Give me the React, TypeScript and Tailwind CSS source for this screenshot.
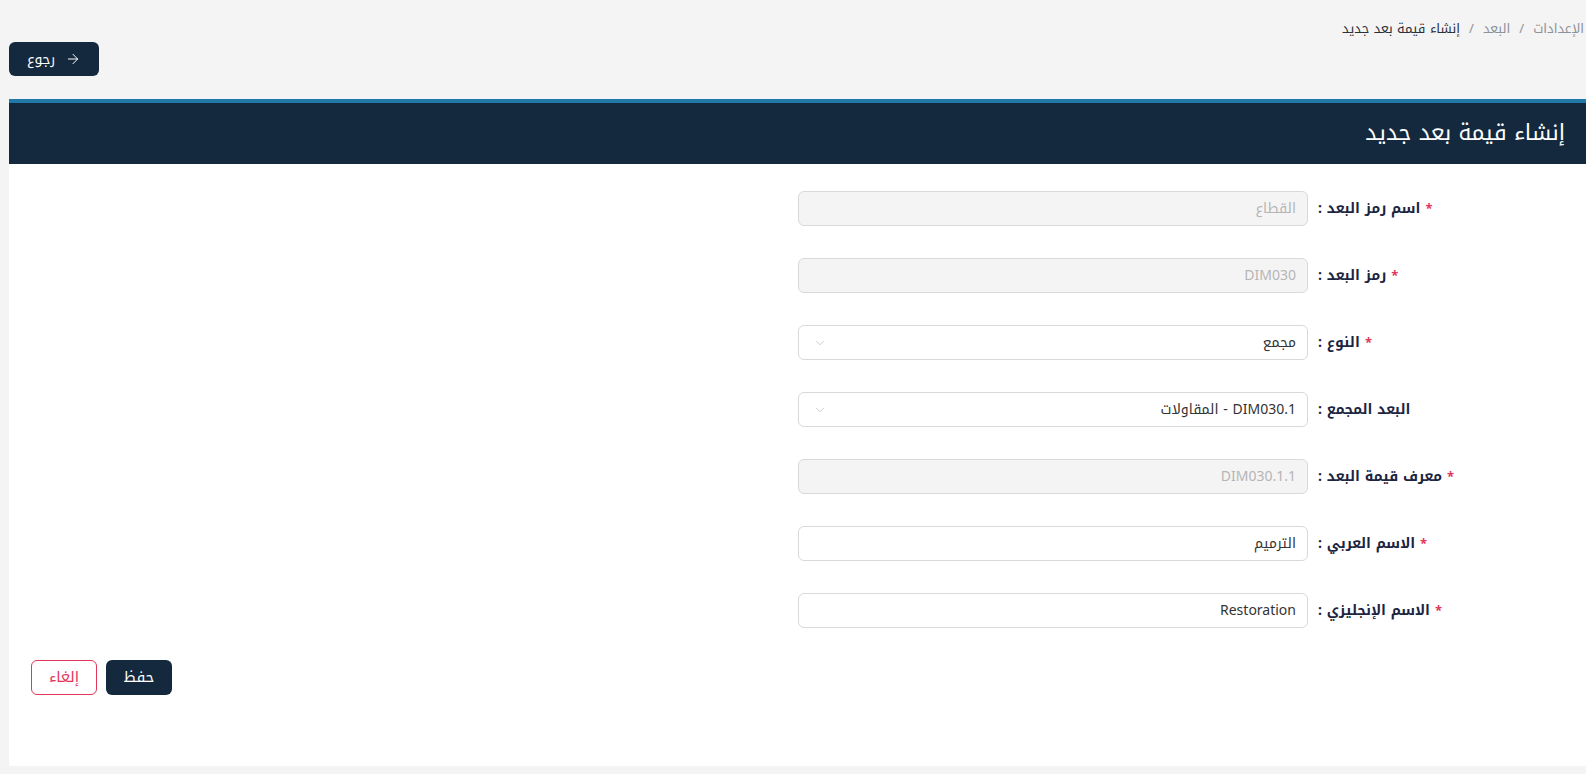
import React from "react";
import { ArrowRight, ChevronDown } from "lucide-react";

const font = { fontFamily: '"Noto Kufi Arabic", "Noto Sans Arabic", "Noto Sans", "DejaVu Sans", sans-serif' };

function Label({ text, required }: { text: string; required?: boolean }) {
  return (
    <div className="w-[268px] shrink-0 text-left text-[14px] font-bold text-[#1b2440] leading-none">
      {required && <span className="text-[#e2365a] text-[13px] ml-[5px]">*</span>}
      <span>{text}</span>
    </div>
  );
}

function Field({ label, required, value, disabled, select }: { label: string; required?: boolean; value: string; disabled?: boolean; select?: boolean }) {
  return (
    <div className="flex items-center gap-[10px] h-[35px]">
      <Label text={label} required={required} />
      <div
        className={`w-[510px] h-[35px] shrink-0 rounded-[6px] border border-[#d9d9d9] flex items-center justify-between pr-[11px] pl-[14px] text-[14px] ${
          disabled ? "bg-[#f4f4f4] text-[#b5b5b5]" : "bg-white text-[#333]"
        }`}
      >
        <span>{value}</span>
        {select && <ChevronDown size={14} strokeWidth={1.2} className="text-[#b8b8b8]" />}
      </div>
    </div>
  );
}

export default function App() {
  return (
    <div dir="rtl" style={font} className="min-h-[774px] bg-[#f4f4f4] pl-[9px] overflow-hidden">
      <div className="h-[99px] relative">
        <div className="pt-[18px] pr-[2px] flex items-center gap-[9px] text-[13px] whitespace-nowrap leading-[22px]">
          <span className="text-[#8b9299]">الإعدادات</span>
          <span className="text-[#8b9299]">/</span>
          <span className="text-[#8b9299]">البعد</span>
          <span className="text-[#8b9299]">/</span>
          <span className="text-[#2a2f3a] font-normal">إنشاء قيمة بعد جديد</span>
        </div>
        <div className="flex justify-end mt-[2px]">
          <button className="w-[90px] h-[34px] rounded-[6px] bg-[#14293e] text-white flex items-center justify-center gap-[10px] text-[14px]">
            <ArrowRight size={16} strokeWidth={1.5} />
            <span>رجوع</span>
          </button>
        </div>
      </div>
      <div className="bg-white h-[667px] flex flex-col">
        <div className="border-t-[4px] border-[#2279a8] bg-[#14293e] h-[65px] flex items-center pr-[21px]">
          <h1 className="text-white text-[22px] font-normal">إنشاء قيمة بعد جديد</h1>
        </div>
        <div className="pt-[27px] flex flex-col gap-[32px]">
          <Field label="اسم رمز البعد :" required value="القطاع" disabled />
          <Field label="رمز البعد :" required value="DIM030" disabled />
          <Field label="النوع :" required value="مجمع" select />
          <Field label="البعد المجمع :" value="DIM030.1 - المقاولات" select />
          <Field label="معرف قيمة البعد :" required value="DIM030.1.1" disabled />
          <Field label="الاسم العربي :" required value="الترميم" />
          <Field label="الاسم الإنجليزي :" required value="Restoration" />
        </div>
        <div className="flex justify-end gap-[9px] pl-[22px] mt-[32px]">
          <button className="w-[66px] h-[35px] rounded-[6px] bg-[#14293e] text-white text-[15px]">حفظ</button>
          <button className="w-[66px] h-[35px] rounded-[6px] border border-[#e2365a] text-[#e2365a] bg-white text-[15px]">إلغاء</button>
        </div>
      </div>
    </div>
  );
}
